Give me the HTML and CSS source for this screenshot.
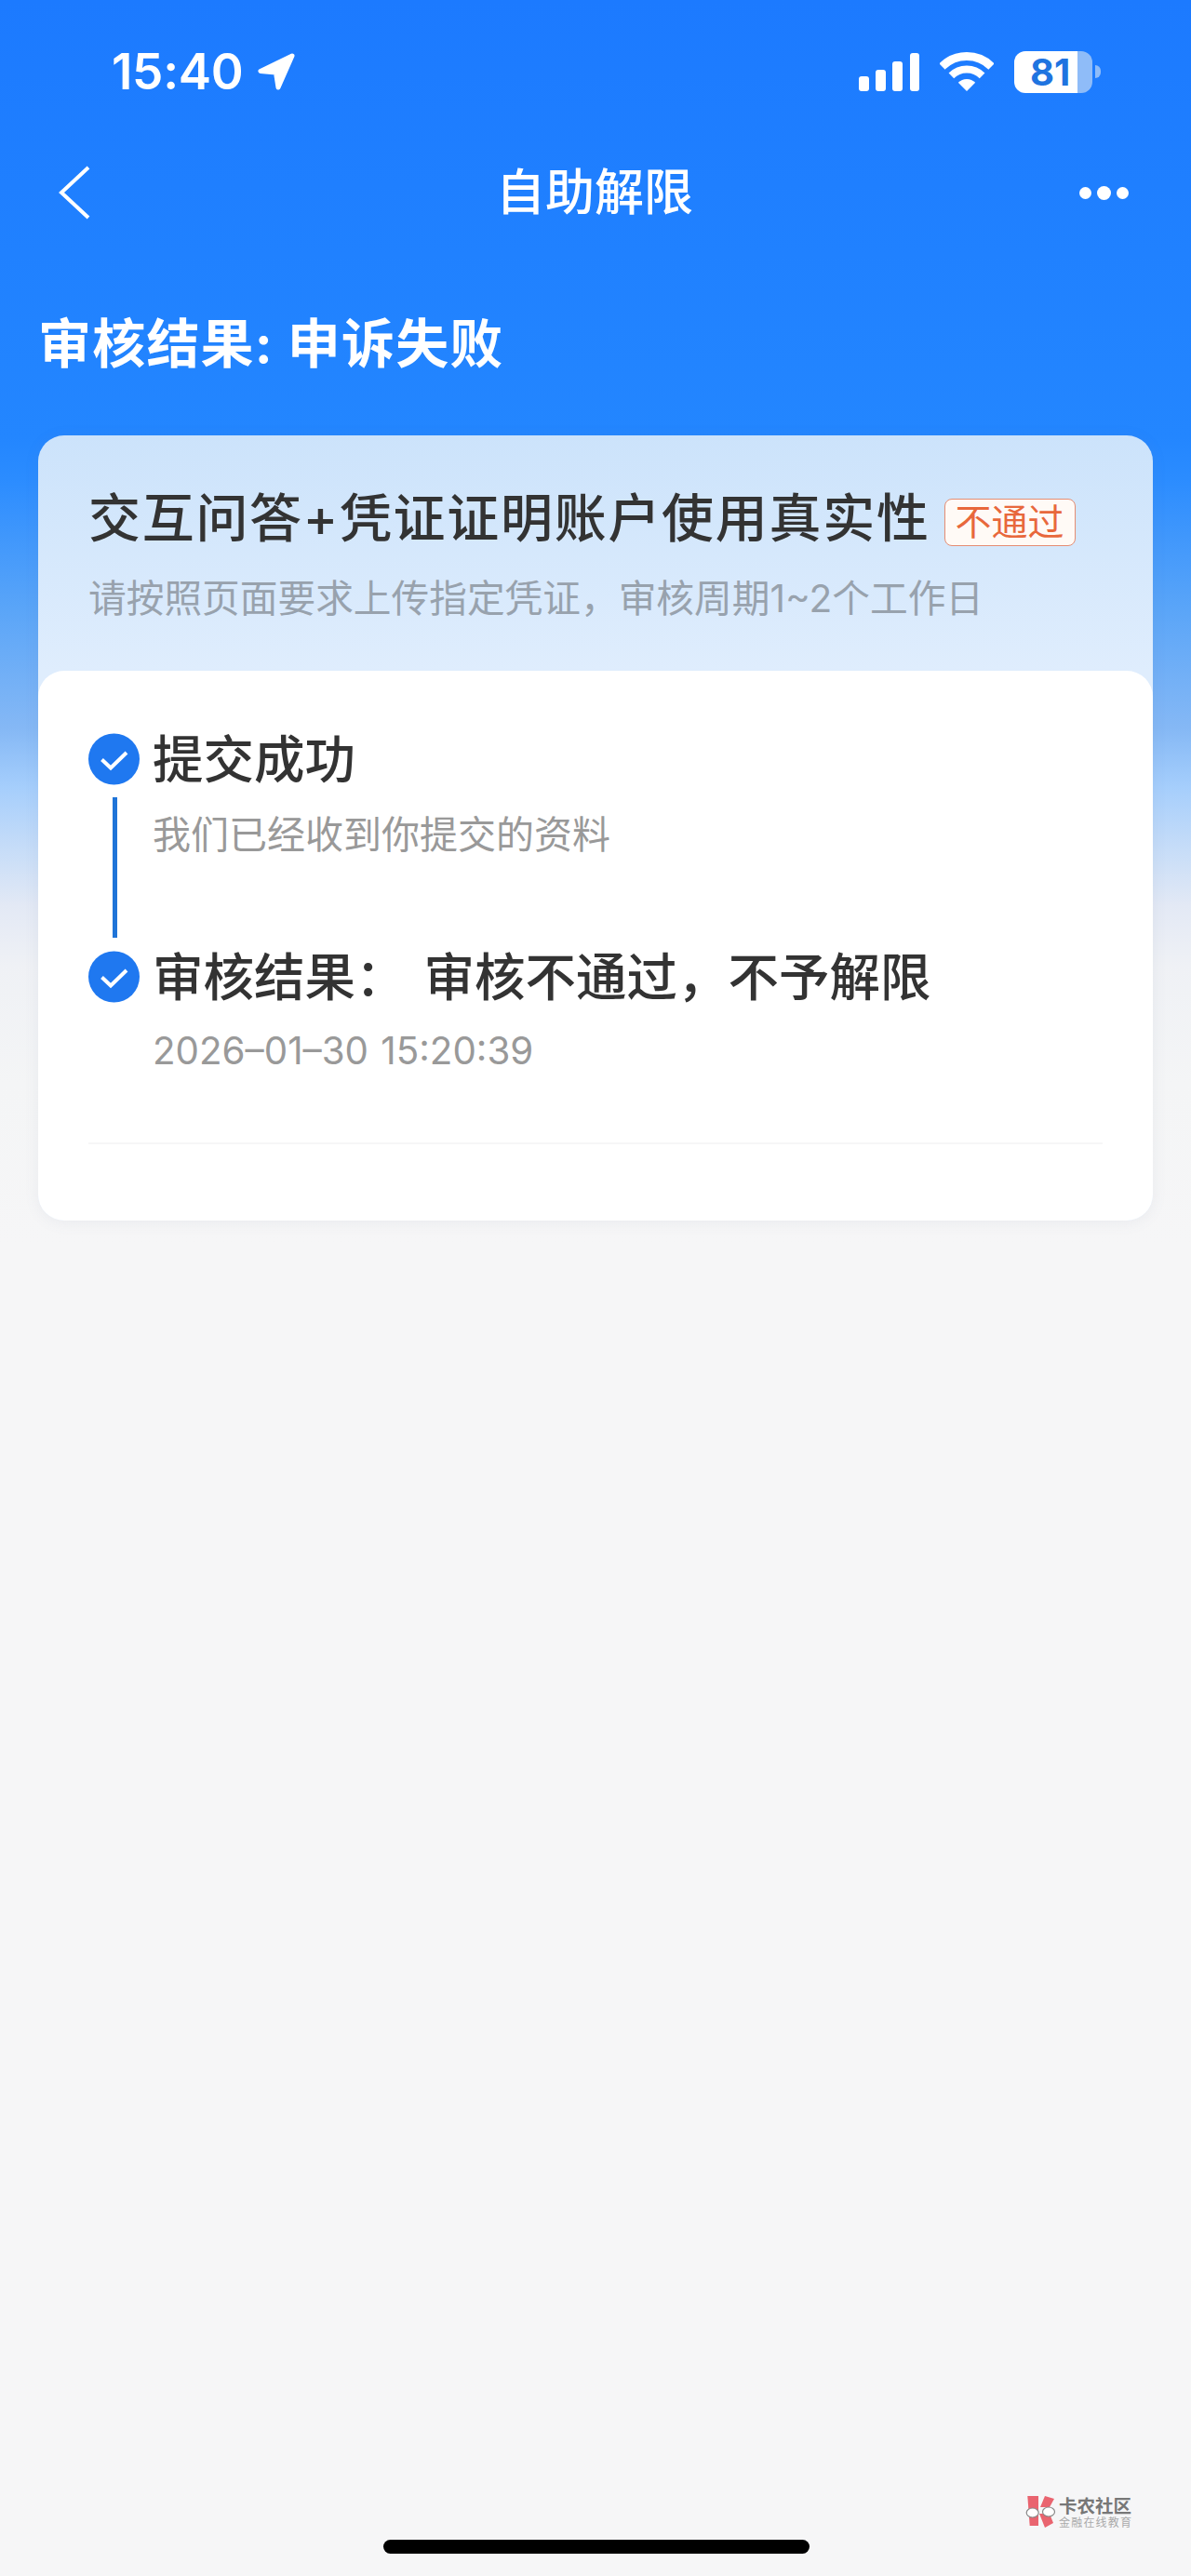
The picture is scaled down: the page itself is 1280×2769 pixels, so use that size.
FILE: index.html
```html
<!DOCTYPE html>
<html lang="zh-CN">
<head>
<meta charset="utf-8">
<title>自助解限</title>
<link rel="stylesheet" href="styles.css">
</head>
<body>
<div class="page">
  <header class="status">
    <div class="status-left">
      <span class="time">15:40</span>
      <svg class="arrow" width="41" height="40" viewBox="0 0 41 40"><path d="M38 3 L4 19.5 L20.5 21 L23 37 Z" fill="#fff" stroke="#fff" stroke-width="5" stroke-linejoin="round"/></svg>
    </div>
    <div class="status-right">
      <svg class="signal" width="65" height="41" viewBox="0 0 65 41"><rect x="0" y="25" width="11" height="16" rx="3" fill="#fff"/><rect x="18" y="18" width="11" height="23" rx="3" fill="#fff"/><rect x="36" y="9" width="11" height="32" rx="3" fill="#fff"/><rect x="55" y="0" width="10" height="41" rx="3" fill="#fff"/></svg>
      <svg class="wifi" width="58" height="42" viewBox="0 0 58 42"><path d="M2.5 15.5 A37.5 37.5 0 0 1 55.5 15.5" fill="none" stroke="#fff" stroke-width="9"/><path d="M12.4 25.4 A23.5 23.5 0 0 1 45.6 25.4" fill="none" stroke="#fff" stroke-width="8"/><path d="M29 42 L19.8 32.8 A13 13 0 0 1 38.2 32.8 Z" fill="#fff"/></svg>
      <div class="battery"><div class="battery-body"><span class="battery-num">81</span></div><div class="battery-nub"></div></div>
    </div>
  </header>

  <nav class="nav">
    <svg class="back" width="38" height="60" viewBox="0 0 38 60"><path d="M35 3 L6 30 L35 57" fill="none" stroke="#fff" stroke-width="4"/></svg>
    <h1 class="nav-title">自助解限</h1>
    <div class="more"><i></i><i class="big"></i><i></i></div>
  </nav>

  <h2 class="result">审核结果: 申诉失败</h2>

  <section class="card">
    <div class="card-head">
      <div class="head-row">
        <span class="head-title">交互问答+凭证证明账户使用真实性</span>
        <span class="badge">不通过</span>
      </div>
      <p class="head-sub">请按照页面要求上传指定凭证，审核周期1~2个工作日</p>
    </div>
    <div class="card-body">
      <div class="step">
        <div class="rail">
          <svg class="tick" width="55" height="56" viewBox="0 0 55 56"><circle cx="27.5" cy="28" r="27.5" fill="#1f78f0"/><path d="M14.5 28.5 L24 37.5 L41 21" fill="none" stroke="#fff" stroke-width="4"/></svg>
          <div class="connector"></div>
        </div>
        <div class="step-text">
          <div class="step-title">提交成功</div>
          <div class="step-sub">我们已经收到你提交的资料</div>
        </div>
      </div>
      <div class="step">
        <div class="rail">
          <svg class="tick" width="55" height="56" viewBox="0 0 55 56"><circle cx="27.5" cy="28" r="27.5" fill="#1f78f0"/><path d="M14.5 28.5 L24 37.5 L41 21" fill="none" stroke="#fff" stroke-width="4"/></svg>
        </div>
        <div class="step-text">
          <div class="step-title">审核结果：<span class="verdict">审核不通过，不予解限</span></div>
          <div class="step-date">2026–01–30 15:20:39</div>
        </div>
      </div>
      <div class="divider"></div>
    </div>
  </section>

  <div class="watermark">
    <svg width="36" height="36" viewBox="0 0 36 36"><path d="M4.3 0 L16 0 L16 32 L6.7 32 Z" fill="#e9646f"/><path d="M23 0 L33 3 L28 12 L18 12 Z" fill="#e9646f"/><path d="M17 19 L28 19 L32 29 L23 34 Z" fill="#e9646f"/><ellipse cx="9.7" cy="18" rx="6.5" ry="5" fill="#fff" stroke="#8a8a8a" stroke-width="1.2"/><ellipse cx="27" cy="17" rx="6.5" ry="5" fill="#fff" stroke="#8a8a8a" stroke-width="1.2"/></svg>
    <div class="wm-text"><div class="wm-name">卡农社区</div><div class="wm-sub">金融在线教育</div></div>
  </div>
  <div class="home-bar"></div>
</div>
</body>
</html>
```

FILE: styles.css
```css
* { box-sizing: border-box; }
html, body { margin: 0; padding: 0; }
body { font-family: Inter, "Noto Sans CJK SC", sans-serif; }
.page {
  position: relative;
  width: 1280px;
  height: 2769px;
  overflow: hidden;
  background: linear-gradient(180deg, #1c7aff 0, #2386ff 470px, #2b8cff 515px, #5aa5f8 655px, #85b8f5 783px, #a5cefc 846px, #c5dcf8 910px, #e3e9f5 974px, #eff1f5 1038px, #f4f5f6 1165px, #f6f6f7 1340px, #f6f6f7 100%);
}
.status { height: 154px; display: flex; justify-content: space-between; align-items: center; padding: 0 97px 0 120px; }
.status-left { display: flex; align-items: center; gap: 15px; }
.time { color: #fff; font-size: 53px; font-weight: 600; line-height: 60px; letter-spacing: -0.3px; }
.status-right { display: flex; align-items: center; gap: 22px; margin-left: -2px; }
.battery { display: flex; align-items: center; gap: 3px; }
.battery-body { width: 84px; height: 45px; border-radius: 12px; background: linear-gradient(90deg, #fff 0, #fff 68px, #8fbcf8 68px); padding-left: 17px; color: #1f74e0; font-size: 40px; font-weight: 700; line-height: 45px; }
.battery-nub { width: 6px; height: 14px; border-radius: 0 6px 6px 0; background: #8fbcf8; }
.nav { height: 106px; position: relative; display: flex; justify-content: space-between; align-items: center; padding: 0 67px 0 60px; }
.nav-title { margin: 0; position: absolute; left: -2px; right: 0; text-align: center; color: #fff; font-size: 53px; font-weight: 500; line-height: 70px; }
.more { display: flex; align-items: center; gap: 6px; }
.more i { display: block; width: 13px; height: 13px; border-radius: 50%; background: #fff; }
.more i.big { width: 15px; height: 15px; }
.result { margin: 0; padding: 70px 0 58px 41px; color: #fff; font-size: 57px; font-weight: 700; line-height: 80px; letter-spacing: 1.2px; }
.card { margin: 0 41px; border-radius: 28px; background: linear-gradient(180deg, #cce3fb 0, #dfedfd 253px); box-shadow: 0 2px 16px rgba(110,125,150,.09); }
.card-head { padding: 54px 40px 52px 54px; }
.head-row { display: flex; align-items: center; gap: 15px; }
.head-title { color: #333; font-size: 56px; font-weight: 500; line-height: 70px; white-space: nowrap; letter-spacing: 1.7px; }
.badge { width: 141px; height: 51px; margin-top: 9px; border: 1.5px solid #e58d73; border-radius: 8px; background: #fffaf6; color: #e8683c; font-size: 39px; line-height: 47px; text-align: center; }
.head-sub { margin: 27px 0 0; color: #98a2ad; font-size: 40.7px; line-height: 50px; white-space: nowrap; }
.card-body { height: 591px; padding: 60px 54px 0; border-radius: 28px; background: #fff; }
.step { display: flex; gap: 14px; }
.rail { width: 55px; display: flex; flex-direction: column; align-items: center; padding-top: 7px; }
.connector { flex: 1; width: 5px; margin: 13px 0 7px 2px; background: #1f74d8; }
.step-text { flex: 1; }
.step:first-child .step-text { padding-bottom: 93px; }
.step-title { color: #333; font-size: 54.5px; font-weight: 500; line-height: 70px; white-space: nowrap; }
.verdict { margin-left: 19px; }
.step-sub { margin-top: 21px; color: #999; font-size: 41px; line-height: 50px; }
.step-date { margin-top: 20px; color: #999; font-size: 40.3px; line-height: 50px; word-spacing: 2px; }
.divider { height: 2px; margin-top: 73px; background: #f6f6f7; }
.watermark { position: absolute; left: 1100px; top: 2683px; display: flex; align-items: flex-start; gap: 2px; }
.wm-text { padding-top: 1px; }
.wm-name { color: #777; font-size: 19.5px; font-weight: 700; line-height: 21px; white-space: nowrap; }
.wm-sub { color: #aaa; font-size: 12px; line-height: 13px; letter-spacing: 1.2px; white-space: nowrap; }
.home-bar { position: absolute; left: 412px; top: 2730px; width: 458px; height: 15px; border-radius: 8px; background: #000; }
```
